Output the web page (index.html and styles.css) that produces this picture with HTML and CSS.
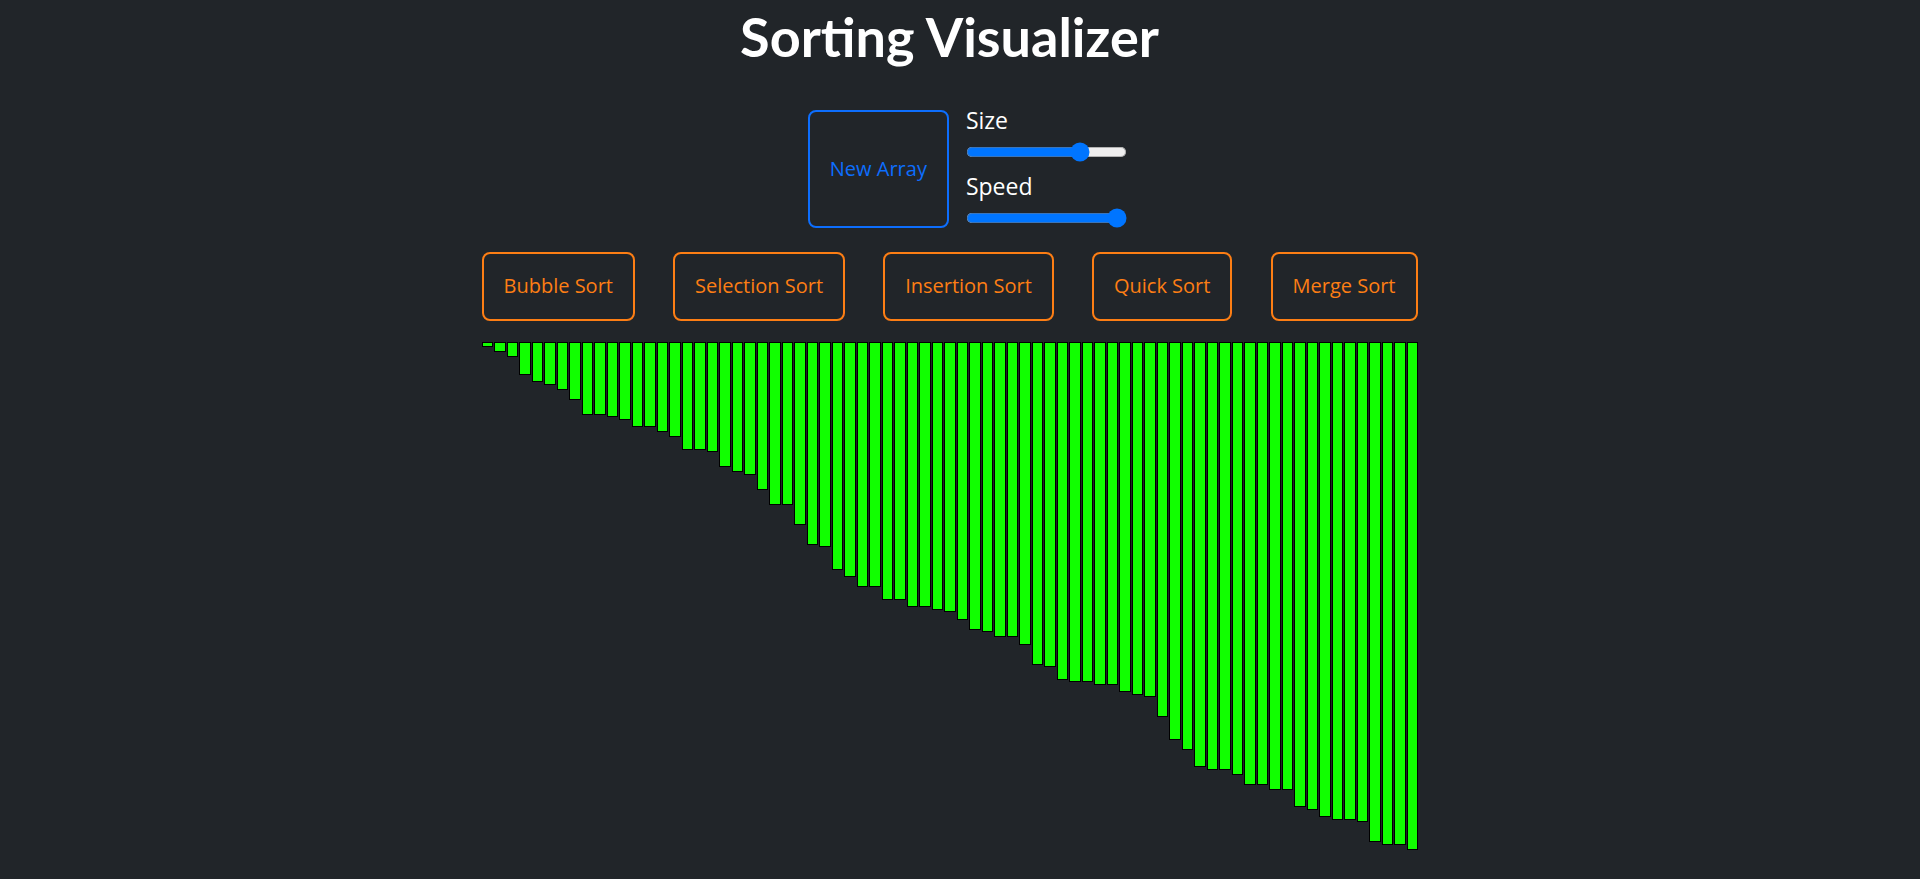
FILE: index.html
```html
<!DOCTYPE html>
<html lang="en">
<head>
<meta charset="utf-8">
<title>Sorting Visualizer</title>
<link rel="stylesheet" href="styles.css">
</head>
<body>
<main class="app">
  <h1 class="title">Sorting Visualizer</h1>
  <div class="controls">
    <button class="btn btn-new" type="button">New Array</button>
    <div class="sliders">
      <label class="slider-label" for="size">Size</label>
      <input class="range" type="range" id="size" min="5" max="100" value="75">
      <label class="slider-label slider-label-2" for="speed">Speed</label>
      <input class="range" type="range" id="speed" min="1" max="100" value="100">
    </div>
  </div>
  <div class="algos">
    <button class="btn btn-algo" type="button">Bubble Sort</button>
    <button class="btn btn-algo" type="button">Selection Sort</button>
    <button class="btn btn-algo" type="button">Insertion Sort</button>
    <button class="btn btn-algo" type="button">Quick Sort</button>
    <button class="btn btn-algo" type="button">Merge Sort</button>
  </div>
  <div class="bars">
    <div class="bar" style="height:5px"></div>
    <div class="bar" style="height:10px"></div>
    <div class="bar" style="height:15px"></div>
    <div class="bar" style="height:33px"></div>
    <div class="bar" style="height:40px"></div>
    <div class="bar" style="height:43px"></div>
    <div class="bar" style="height:48px"></div>
    <div class="bar" style="height:58px"></div>
    <div class="bar" style="height:73px"></div>
    <div class="bar" style="height:73px"></div>
    <div class="bar" style="height:75px"></div>
    <div class="bar" style="height:78px"></div>
    <div class="bar" style="height:85px"></div>
    <div class="bar" style="height:85px"></div>
    <div class="bar" style="height:90px"></div>
    <div class="bar" style="height:95px"></div>
    <div class="bar" style="height:108px"></div>
    <div class="bar" style="height:108px"></div>
    <div class="bar" style="height:110px"></div>
    <div class="bar" style="height:125px"></div>
    <div class="bar" style="height:130px"></div>
    <div class="bar" style="height:133px"></div>
    <div class="bar" style="height:148px"></div>
    <div class="bar" style="height:163px"></div>
    <div class="bar" style="height:163px"></div>
    <div class="bar" style="height:183px"></div>
    <div class="bar" style="height:203px"></div>
    <div class="bar" style="height:205px"></div>
    <div class="bar" style="height:228px"></div>
    <div class="bar" style="height:235px"></div>
    <div class="bar" style="height:245px"></div>
    <div class="bar" style="height:245px"></div>
    <div class="bar" style="height:258px"></div>
    <div class="bar" style="height:258px"></div>
    <div class="bar" style="height:265px"></div>
    <div class="bar" style="height:265px"></div>
    <div class="bar" style="height:268px"></div>
    <div class="bar" style="height:270px"></div>
    <div class="bar" style="height:278px"></div>
    <div class="bar" style="height:288px"></div>
    <div class="bar" style="height:290px"></div>
    <div class="bar" style="height:295px"></div>
    <div class="bar" style="height:295px"></div>
    <div class="bar" style="height:303px"></div>
    <div class="bar" style="height:323px"></div>
    <div class="bar" style="height:325px"></div>
    <div class="bar" style="height:338px"></div>
    <div class="bar" style="height:340px"></div>
    <div class="bar" style="height:340px"></div>
    <div class="bar" style="height:343px"></div>
    <div class="bar" style="height:343px"></div>
    <div class="bar" style="height:350px"></div>
    <div class="bar" style="height:353px"></div>
    <div class="bar" style="height:355px"></div>
    <div class="bar" style="height:375px"></div>
    <div class="bar" style="height:398px"></div>
    <div class="bar" style="height:408px"></div>
    <div class="bar" style="height:425px"></div>
    <div class="bar" style="height:428px"></div>
    <div class="bar" style="height:428px"></div>
    <div class="bar" style="height:433px"></div>
    <div class="bar" style="height:443px"></div>
    <div class="bar" style="height:443px"></div>
    <div class="bar" style="height:448px"></div>
    <div class="bar" style="height:448px"></div>
    <div class="bar" style="height:465px"></div>
    <div class="bar" style="height:468px"></div>
    <div class="bar" style="height:475px"></div>
    <div class="bar" style="height:478px"></div>
    <div class="bar" style="height:478px"></div>
    <div class="bar" style="height:480px"></div>
    <div class="bar" style="height:500px"></div>
    <div class="bar" style="height:503px"></div>
    <div class="bar" style="height:503px"></div>
    <div class="bar" style="height:508px"></div>
  </div>
</main>
</body>
</html>
```

FILE: styles.css
```css
html, body {
  margin: 0;
  padding: 0;
}

body {
  box-sizing: border-box;
  padding-right: 21px;
  background: #212529;
  color: #fff;
  font-family: "Open Sans", "Noto Sans", sans-serif;
}

.app {
  width: 936px;
  margin: 0 auto;
  padding-bottom: 8px;
}

.title {
  margin: 4.7px 0 0;
  font-family: Lato, "Open Sans", sans-serif;
  font-weight: 700;
  font-size: 54px;
  line-height: 1.2;
  text-align: center;
  color: #fff;
}

.controls {
  display: flex;
  justify-content: center;
  align-items: flex-end;
  gap: 17px;
  margin-top: 36.5px;
  padding-left: 36px;
}

.btn {
  box-sizing: border-box;
  background: transparent;
  font-family: "Open Sans", "Noto Sans", sans-serif;
  font-size: 20px;
  line-height: 1.5;
  border-style: solid;
  border-width: 2px;
  border-radius: 8px;
  cursor: pointer;
}

.btn-new {
  width: 141px;
  height: 118px;
  padding: 0;
  color: #0d6efd;
  border-color: #0d6efd;
}

.sliders {
  display: flex;
  flex-direction: column;
  align-items: flex-start;
}

.slider-label {
  display: block;
  font-size: 23px;
  line-height: 28px;
  color: #fff;
}

.slider-label-2 {
  margin-top: 10px;
}

.range {
  display: block;
  margin: 6.4px 0 0;
  zoom: 1.25;
  accent-color: #0075ff;
}

.algos {
  display: flex;
  justify-content: space-between;
  margin-top: 23.7px;
}

.btn-algo {
  padding: 17.5px 20px;
  color: #fd7e14;
  border-color: #fd7e14;
}

.bars {
  display: flex;
  align-items: flex-start;
  gap: 1px;
  height: 532px;
  margin-top: 21.3px;
}

.bar {
  flex: 1 1 0;
  box-sizing: border-box;
  background: #11ff00;
  border: 1px solid #000;
}
```
